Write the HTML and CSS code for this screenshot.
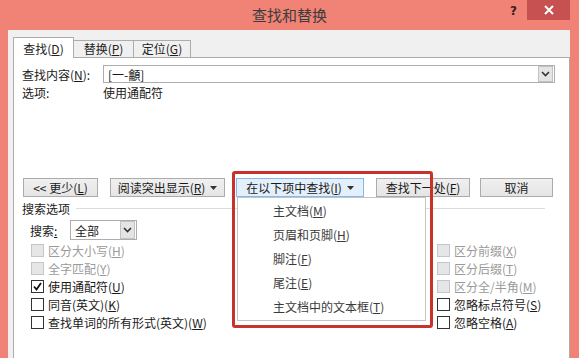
FILE: index.html
```html
<html lang="zh-CN">
<head>
    <meta charset="UTF-8">
    <title>查找和替换</title>
    <link rel="stylesheet" href="styles.css">
</head>
<body>

    <div class="window">
        <div class="titlebar">
            <div class="title-spacer"></div>
            <div class="title">查找和替换</div>
            <div class="caption-btns">
                <span class="help">?</span>
                <span class="close">
                    <svg width="10" height="10" viewBox="0 0 10 10"><path d="M1 1 L9 9 M9 1 L1 9" stroke="#fff" stroke-width="2"/></svg>
                </span>
            </div>
        </div>

        <div class="client">
            <!-- Вкладки -->
            <div class="tabs">
                <div class="tab active">查找(<u>D</u>)</div>
                <div class="tab">替换(<u>P</u>)</div>
                <div class="tab tab-last">定位(<u>G</u>)</div>
            </div>

            <div class="panel">
                <div class="row">
                    <span class="label">查找内容(<u>N</u>):</span>
                    <div class="combo combo-wide">
                        <span class="combo-text">[一-龥]</span>
                        <span class="combo-btn">
                            <svg width="9" height="6" viewBox="0 0 9 6"><path d="M1 1 L4.5 4.5 L8 1" fill="none" stroke="#333" stroke-width="1.6"/></svg>
                        </span>
                    </div>
                </div>
                <div class="row">
                    <span class="label">选项:</span>
                    <span>使用通配符</span>
                </div>

                <!-- Кнопки -->
                <div class="buttons">
                    <button class="btn btn-less"><span>&lt;&lt; 更少(<u>L</u>)</span></button>
                    <button class="btn btn-read"><span>阅读突出显示(<u>R</u>)</span><svg class="caret" width="7" height="4" viewBox="0 0 7 4"><path d="M0 0 H7 L3.5 4 Z" fill="#333"/></svg></button>
                    <div class="finder">
                        <button class="btn btn-find-in"><span>在以下项中查找(<u>I</u>)</span><svg class="caret" width="7" height="4" viewBox="0 0 7 4"><path d="M0 0 H7 L3.5 4 Z" fill="#333"/></svg></button>
                        <div class="menu">
                            <div class="menu-item">主文档(<u>M</u>)</div>
                            <div class="menu-item">页眉和页脚(<u>H</u>)</div>
                            <div class="menu-item">脚注(<u>F</u>)</div>
                            <div class="menu-item">尾注(<u>E</u>)</div>
                            <div class="menu-item">主文档中的文本框(<u>T</u>)</div>
                        </div>
                        <div class="highlight"></div>
                    </div>
                    <button class="btn btn-next"><span>查找下一处(<u>F</u>)</span></button>
                    <button class="btn btn-cancel"><span>取消</span></button>
                </div>

                <div class="group-title">
                    <span>搜索选项</span>
                    <span class="rule"></span>
                </div>

                <div class="search-row">
                    <span class="search-label">搜索<u>:</u></span>
                    <div class="combo combo-small">
                        <span class="combo-text">全部</span>
                        <span class="combo-btn">
                            <svg width="9" height="6" viewBox="0 0 9 6"><path d="M1 1 L4.5 4.5 L8 1" fill="none" stroke="#333" stroke-width="1.6"/></svg>
                        </span>
                    </div>
                </div>

                <!-- Параметры поиска -->
                <div class="options">
                    <div class="opt disabled"><span class="box"></span><span>区分大小写(<u>H</u>)</span></div>
                    <div class="opt disabled"><span class="box"></span><span>区分前缀(<u>X</u>)</span></div>
                    <div class="opt disabled"><span class="box"></span><span>全字匹配(<u>Y</u>)</span></div>
                    <div class="opt disabled"><span class="box"></span><span>区分后缀(<u>T</u>)</span></div>
                    <div class="opt"><span class="box"><svg width="11" height="11" viewBox="0 0 11 11"><path d="M2 5.5 L4.5 8.5 L9 2" fill="none" stroke="#111" stroke-width="1.8"/></svg></span><span>使用通配符(<u>U</u>)</span></div>
                    <div class="opt disabled"><span class="box"></span><span>区分全/半角(<u>M</u>)</span></div>
                    <div class="opt"><span class="box"></span><span>同音(英文)(<u>K</u>)</span></div>
                    <div class="opt"><span class="box"></span><span>忽略标点符号(<u>S</u>)</span></div>
                    <div class="opt"><span class="box"></span><span>查找单词的所有形式(英文)(<u>W</u>)</span></div>
                    <div class="opt"><span class="box"></span><span>忽略空格(<u>A</u>)</span></div>
                </div>
            </div>
        </div>
    </div>

</body>
</html>
```

FILE: styles.css
```css
body {
    margin: 0;
    background-color: #f08276;
    font-family: "Noto Sans CJK SC", "DejaVu Sans", sans-serif;
    font-size: 12px;
    color: #1a1a1a;
    overflow: hidden;
}
.window {
    width: 579px;
    height: 358px;
    display: flex;
    flex-direction: column;
}

/* Заголовок окна */
.titlebar {
    height: 30px;
    display: flex;
    flex-shrink: 0;
}
.title-spacer {
    width: 79px;
}
.title {
    flex: 1;
    text-align: center;
    font-size: 15px;
    line-height: 30px;
    color: #3c3c3c;
}
.caption-btns {
    width: 79px;
    display: flex;
    align-items: flex-start;
}
.help {
    width: 27px;
    height: 21px;
    line-height: 22px;
    text-align: center;
    font-family: "DejaVu Sans", sans-serif;
    font-weight: bold;
    font-size: 12px;
    color: #3a1a16;
}
.close {
    width: 43px;
    height: 20px;
    background-color: #c75050;
    display: flex;
    align-items: center;
    justify-content: center;
}

/* Клиентская область */
.client {
    flex: 1;
    margin: 0 9px 0 8px;
    background-color: #f0f0f0;
    padding: 7px 0 0 5px;
    display: flex;
    flex-direction: column;
}
.tabs {
    display: flex;
    align-items: flex-end;
    height: 20px;
    position: relative;
    z-index: 1;
}
.tab {
    height: 16px;
    line-height: 16px;
    width: 59px;
    text-align: center;
    background-color: #f0f0f0;
    border: 1px solid #acacac;
    border-bottom: none;
    border-left: none;
    color: #222;
}
.tab.active {
    height: 20px;
    line-height: 22px;
    background-color: #fff;
    border-left: 1px solid #acacac;
    margin-bottom: -1px;
    width: 59px;
}
.tab-last {
    width: 56px;
}
.panel {
    flex: 1;
    width: 541px;
    background-color: #fff;
    border: 1px solid #acacac;
    border-bottom: none;
    padding: 7px 6px 0 8px;
}
.row {
    display: flex;
    align-items: center;
    height: 18px;
}
.label {
    width: 81px;
}
u {
    text-decoration: underline;
    text-underline-offset: 1px;
}

/* Поле со списком */
.combo {
    display: flex;
    align-items: center;
    justify-content: space-between;
    border: 1px solid #abadb3;
    background-color: #fff;
    box-sizing: border-box;
}
.combo-wide {
    width: 452px;
    height: 18px;
}
.combo-small {
    width: 67px;
    height: 20px;
}
.combo-text {
    padding-left: 4px;
}
.combo-btn {
    width: 15px;
    height: 100%;
    box-sizing: border-box;
    margin: 0 1px 0 0;
    background-color: #e4e4e4;
    border: 1px solid #c2c2c2;
    display: flex;
    align-items: center;
    justify-content: center;
}

/* Кнопки */
.buttons {
    display: flex;
    margin-top: 77px;
    height: 19px;
}
.btn {
    height: 19px;
    padding: 0;
    font-family: inherit;
    font-size: 12px;
    color: #1a1a1a;
    background: linear-gradient(#f0f0f0, #e5e5e5);
    border: 1px solid #acacac;
    display: flex;
    align-items: center;
    justify-content: center;
    gap: 5px;
}
.btn-less {
    width: 75px;
    margin-left: 1px;
}
.btn-read {
    width: 115px;
    margin-left: 12px;
}
.finder {
    position: relative;
    margin-left: 11px;
}
.btn-find-in {
    width: 128px;
    background: #e3effb;
    border-color: #86b8e8;
}
.btn-next {
    width: 94px;
    margin-left: 12px;
}
.btn-cancel {
    width: 73px;
    margin-left: 10px;
}
.caret {
    margin-top: 1px;
}

/* Выпадающее меню */
.menu {
    position: absolute;
    top: 19px;
    left: 1px;
    width: 187px;
    height: 121px;
    background-color: #fff;
    border: 1px solid #c4c4c4;
    padding-top: 1px;
    z-index: 2;
}
.menu-item {
    height: 24px;
    line-height: 24px;
    padding-left: 35px;
    color: #3a3a3a;
}
.highlight {
    position: absolute;
    left: -4px;
    top: -7px;
    width: 195px;
    height: 151px;
    border: 3px solid #c9322b;
    border-radius: 3px;
    z-index: 3;
}

/* Параметры поиска */
.group-title {
    display: flex;
    align-items: center;
    height: 18px;
    margin-top: 2px;
}
.rule {
    height: 1px;
    width: 469px;
    margin-left: 6px;
    background-color: #dcdcdc;
}
.search-row {
    display: flex;
    align-items: center;
    margin-top: 3px;
    padding-left: 8px;
    height: 20px;
}
.search-label {
    width: 40px;
}
.options {
    display: grid;
    grid-template-columns: 406px 1fr;
    grid-auto-rows: 18px;
    padding-left: 9px;
    margin-top: 1px;
}
.opt {
    display: flex;
    align-items: center;
}
.box {
    width: 13px;
    height: 13px;
    box-sizing: border-box;
    border: 1px solid #333;
    background-color: #fff;
    margin-right: 4px;
    display: flex;
    align-items: center;
    justify-content: center;
}
.opt.disabled {
    color: #9a9a9a;
}
.opt.disabled .box {
    border-color: #c6c6c6;
    background-color: #e6e6e6;
}
```
